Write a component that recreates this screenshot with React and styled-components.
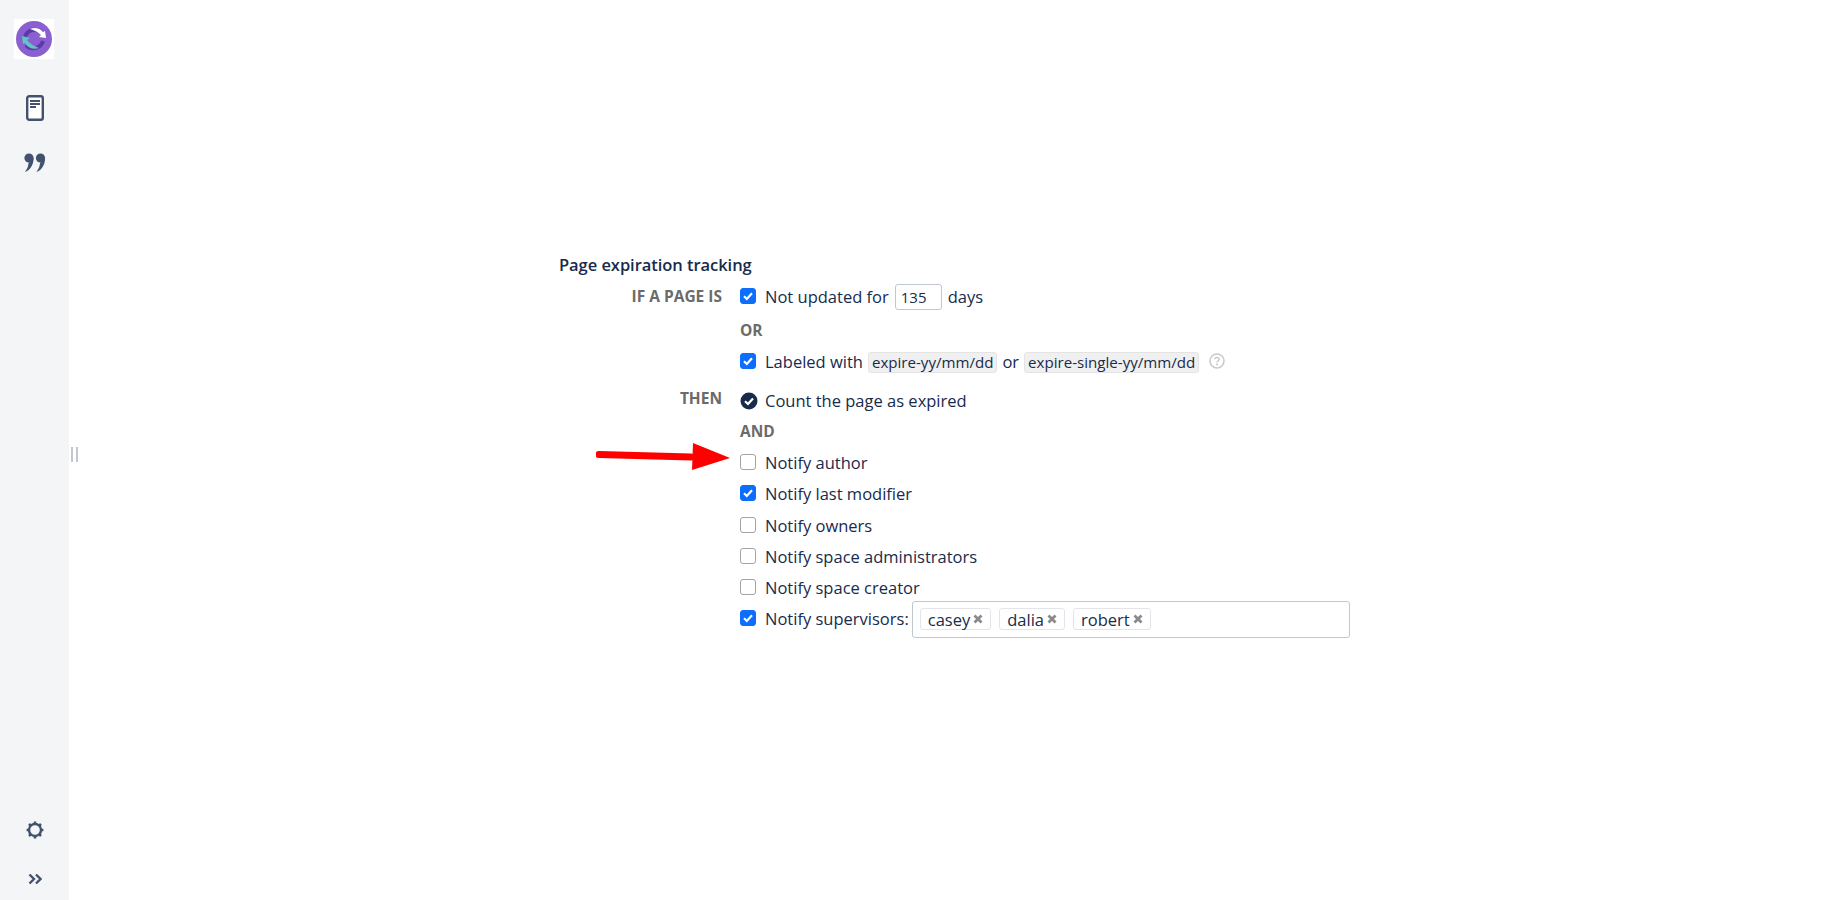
import React from "react";
import styled, { createGlobalStyle } from "styled-components";

const Global = createGlobalStyle`
  html, body { margin: 0; padding: 0; background: #fff; }
  body { font-family: "Open Sans", "Noto Sans", sans-serif; color: #172b4d; }
`;
const Page = styled.div`display: flex; height: 900px; width: 1840px; overflow: hidden;`;
const Sidebar = styled.aside`
  width: 69px; flex: none; background: #f4f5f7; display: flex; flex-direction: column; align-items: center;
  padding: 19px 0 5px; box-sizing: border-box;
`;
const LogoBox = styled.div`width: 40px; height: 40px; margin-left: -2px; background: #fff; display: flex; align-items: center; justify-content: center;`;
const NavIcon = styled.div`
  width: 32px; height: 32px; display: flex; align-items: center; justify-content: center; margin-top: ${p => p.$top}px;
`;
const Spacer = styled.div`flex: 1;`;
const Main = styled.main`flex: 1; position: relative; padding: 254px 0 0 490px; box-sizing: border-box;`;
const Handle = styled.div`
  position: absolute; left: 2px; top: 447px; width: 7px; height: 15px; box-sizing: border-box;
  border-left: 2px solid #c1c7d0; border-right: 2px solid #c1c7d0;
`;
const Arrow = styled.svg`position: absolute; left: 527px; top: 443px; width: 136px; height: 30px;`;
const Title = styled.h2`margin: 0 0 6px; font-size: 16.5px; font-weight: 600; line-height: 22px; color: #172b4d; letter-spacing: -0.05px;`;
const Section = styled.div`display: grid; grid-template-columns: 163px 1fr; column-gap: 18px; margin-bottom: ${p => p.$mb || 0}px;`;
const SideLabel = styled.div`
  text-align: right; font-size: 15.5px; font-weight: 700; color: #6b6b6b; line-height: 19px; padding-top: ${p => p.$top}px;
`;
const Body = styled.div`display: flex; flex-direction: column;`;
const Row = styled.label`display: flex; align-items: center; height: ${p => p.$h || 31}px; font-size: 16.5px; line-height: 22px; white-space: nowrap;`;
const RowText = styled.span`display: inline-flex; align-items: center;`;
const Box = styled.span`
  width: 16px; height: 16px; flex: none; border-radius: 3px; box-sizing: border-box; margin: 0 9px 0 0; position: relative; top: -1px;
  display: flex; align-items: center; justify-content: center;
  background: ${p => p.$on ? "#0d6efd" : "#fff"};
  border: 1px solid ${p => p.$on ? "#0d6efd" : "#a3a3a3"};
`;
const StatusMark = styled.svg`width: 18px; height: 18px; flex: none; margin: 0 7px 0 0;`;
const Joiner = styled.div`font-size: 15.5px; font-weight: 700; color: #6b6b6b; height: ${p => p.$h}px; line-height: ${p => p.$lh}px;`;
const NumberBox = styled.span`
  width: 47px; height: 26px; box-sizing: border-box; border: 1px solid #c1c7d0; border-radius: 3px; margin: 0 6px 0 6px;
  font-size: 15px; line-height: 24px; padding-left: 5px;
`;
const Code = styled.code`
  font-family: inherit; font-size: 15.1px; background: #f0f0f0; border: 1px solid #e4e4e4; border-radius: 3px;
  padding: 0 3px; line-height: 19px; margin: 0 5px 0 5px;
`;
const Help = styled.span`display: inline-flex; margin-left: 5px; position: relative; top: -1px;`;
const TagInput = styled.div`
  width: 438px; height: 37px; box-sizing: border-box; border: 1px solid #c1c7d0; border-radius: 3px; margin-left: 3px;
  display: flex; align-items: center; gap: 8px; padding: 0 7px 1px; position: relative; top: 1px;
`;
const Tag = styled.span`
  display: inline-flex; align-items: center; height: 22px; box-sizing: border-box; border: 1px solid #e3e5ea; border-radius: 3px; padding: 0 7px;
  font-size: 16.5px; line-height: 22px;
`;
const TagLabel = styled.span`position: relative; top: 1px;`;
const TagX = styled.svg`width: 10px; height: 10px; margin-left: 3px; flex: none;`;

const Check = () => (
  <svg width="12" height="12" viewBox="0 0 12 12"><path d="M2 6.300 4.800 9 10 3.200" fill="none" stroke="#fff" strokeWidth="2.200" /></svg>
);
const X = () => (
  <TagX viewBox="0 0 10 10"><path d="M1.500 1.500 8.500 8.500M8.500 1.500 1.500 8.500" stroke="#8a8a8a" strokeWidth="2.800" /></TagX>
);
const Cb = ({ on }) => <Box $on={on}>{on && <Check />}</Box>;
const Pill = ({ children }) => <Tag><TagLabel>{children}</TagLabel><X /></Tag>;

export default function App() {
  return (
    <Page>
      <Global />
      <Sidebar>
        <LogoBox>
          <svg width="36" height="36" viewBox="0 0 36 36">
            <circle cx="18" cy="18" r="18" fill="#8a5fd0" />
            <path d="M9 16c2-7 11-10 17-4" fill="none" stroke="#5b3aa8" strokeWidth="4" />
            <path d="M14 8c5-2 10-1 13 3l2-1 1 7-7-1 2-2c-3-3-7-5-11-6z" fill="#fff" />
            <path d="M27 20c-2 7-11 10-17 4" fill="none" stroke="#5b3aa8" strokeWidth="4" />
            <path d="M23 27c-6 2-11 0-14-5l-2 1-1-8 8 2-3 2c2 3 7 6 12 8z" fill="#62c4c9" />
          </svg>
        </LogoBox>
        <NavIcon $top={33}>
          <svg width="18" height="26" viewBox="0 0 18 26">
            <rect x="1.200" y="1.200" width="15.600" height="23.600" rx="2" fill="#fff" stroke="#42526e" strokeWidth="2.400" />
            <path d="M4 6h10M4 9h10M4 12h6" stroke="#42526e" strokeWidth="1.800" />
          </svg>
        </NavIcon>
        <NavIcon $top={23}>
          <svg width="22" height="20" viewBox="0 0 22 20" fill="#42526e">
            <circle cx="5" cy="5" r="4.600" />
            <path d="M9.600 5C9.600 12 6 17.500 .8 19c2.700-3 3.700-7 3.700-9z" />
            <circle cx="16.500" cy="5" r="4.600" />
            <path d="M21.100 5c0 7-3.600 12.500-8.800 14 2.700-3 3.700-7 3.700-9z" />
          </svg>
        </NavIcon>
        <Spacer />
        <NavIcon>
          <svg width="18" height="18" viewBox="0 0 18 18">
            <circle cx="9" cy="9" r="6" fill="none" stroke="#42526e" strokeWidth="2.400" />
            <path d="M9 .6v3M9 14.400v3M.6 9h3M14.400 9h3M3 3l2.200 2.200M12.800 12.800 15 15M15 3l-2.200 2.200M5.200 12.800 3 15" stroke="#42526e" strokeWidth="2.600" />
          </svg>
        </NavIcon>
        <NavIcon $top={17}>
          <svg width="14" height="12" viewBox="0 0 14 12">
            <path d="M1.500 1.500 6 6l-4.500 4.500M8 1.500 12.500 6 8 10.500" fill="none" stroke="#42526e" strokeWidth="2.400" />
          </svg>
        </NavIcon>
      </Sidebar>
      <Main>
        <Handle />
        <Title>Page expiration tracking</Title>
        <Section $mb={8}>
          <SideLabel $top={5}>IF A PAGE IS</SideLabel>
          <Body>
            <Row $h={30}><Cb on /><RowText>Not updated for<NumberBox>135</NumberBox>days</RowText></Row>
            <Joiner $h={35} $lh={37}>OR</Joiner>
            <Row $h={30}>
              <Cb on />
              <RowText>Labeled with<Code>expire-yy/mm/dd</Code>or<Code>expire-single-yy/mm/dd</Code>
              <Help>
                <svg width="16" height="16" viewBox="0 0 16 16">
                  <circle cx="8" cy="8" r="7" fill="none" stroke="#c9c9c9" strokeWidth="1.500" />
                  <path d="M5.800 6.300C5.800 3.800 10.200 3.800 10.200 6.300 10.200 7.900 8 7.800 8 9.600" fill="none" stroke="#c9c9c9" strokeWidth="1.400" />
                  <circle cx="8" cy="11.500" r="1" fill="#c9c9c9" />
                </svg>
              </Help></RowText>
            </Row>
          </Body>
        </Section>
        <Section>
          <SideLabel $top={4}>THEN</SideLabel>
          <Body>
            <Row $h={31}>
              <StatusMark viewBox="0 0 18 18">
                <circle cx="9" cy="9" r="8.500" fill="#172b4d" />
                <path d="M5 9.200 8 12l5-5.500" fill="none" stroke="#fff" strokeWidth="2.200" />
              </StatusMark>
              <RowText>Count the page as expired</RowText>
            </Row>
            <Joiner $h={31} $lh={31}>AND</Joiner>
            <Row><Cb /><RowText>Notify author</RowText></Row>
            <Row $h={32}><Cb on /><RowText>Notify last modifier</RowText></Row>
            <Row><Cb /><RowText>Notify owners</RowText></Row>
            <Row><Cb /><RowText>Notify space administrators</RowText></Row>
            <Row><Cb /><RowText>Notify space creator</RowText></Row>
            <Row>
              <Cb on /><RowText>Notify supervisors:</RowText>
              <TagInput>
                <Pill>casey</Pill>
                <Pill>dalia</Pill>
                <Pill>robert</Pill>
              </TagInput>
            </Row>
          </Body>
        </Section>
        <Arrow viewBox="0 0 136 30">
          <path d="M3 11.500 95 14" stroke="#ff0000" strokeWidth="7" strokeLinecap="round" />
          <path d="M97 0 134 15 96 27z" fill="#ff0000" />
        </Arrow>
      </Main>
    </Page>
  );
}
